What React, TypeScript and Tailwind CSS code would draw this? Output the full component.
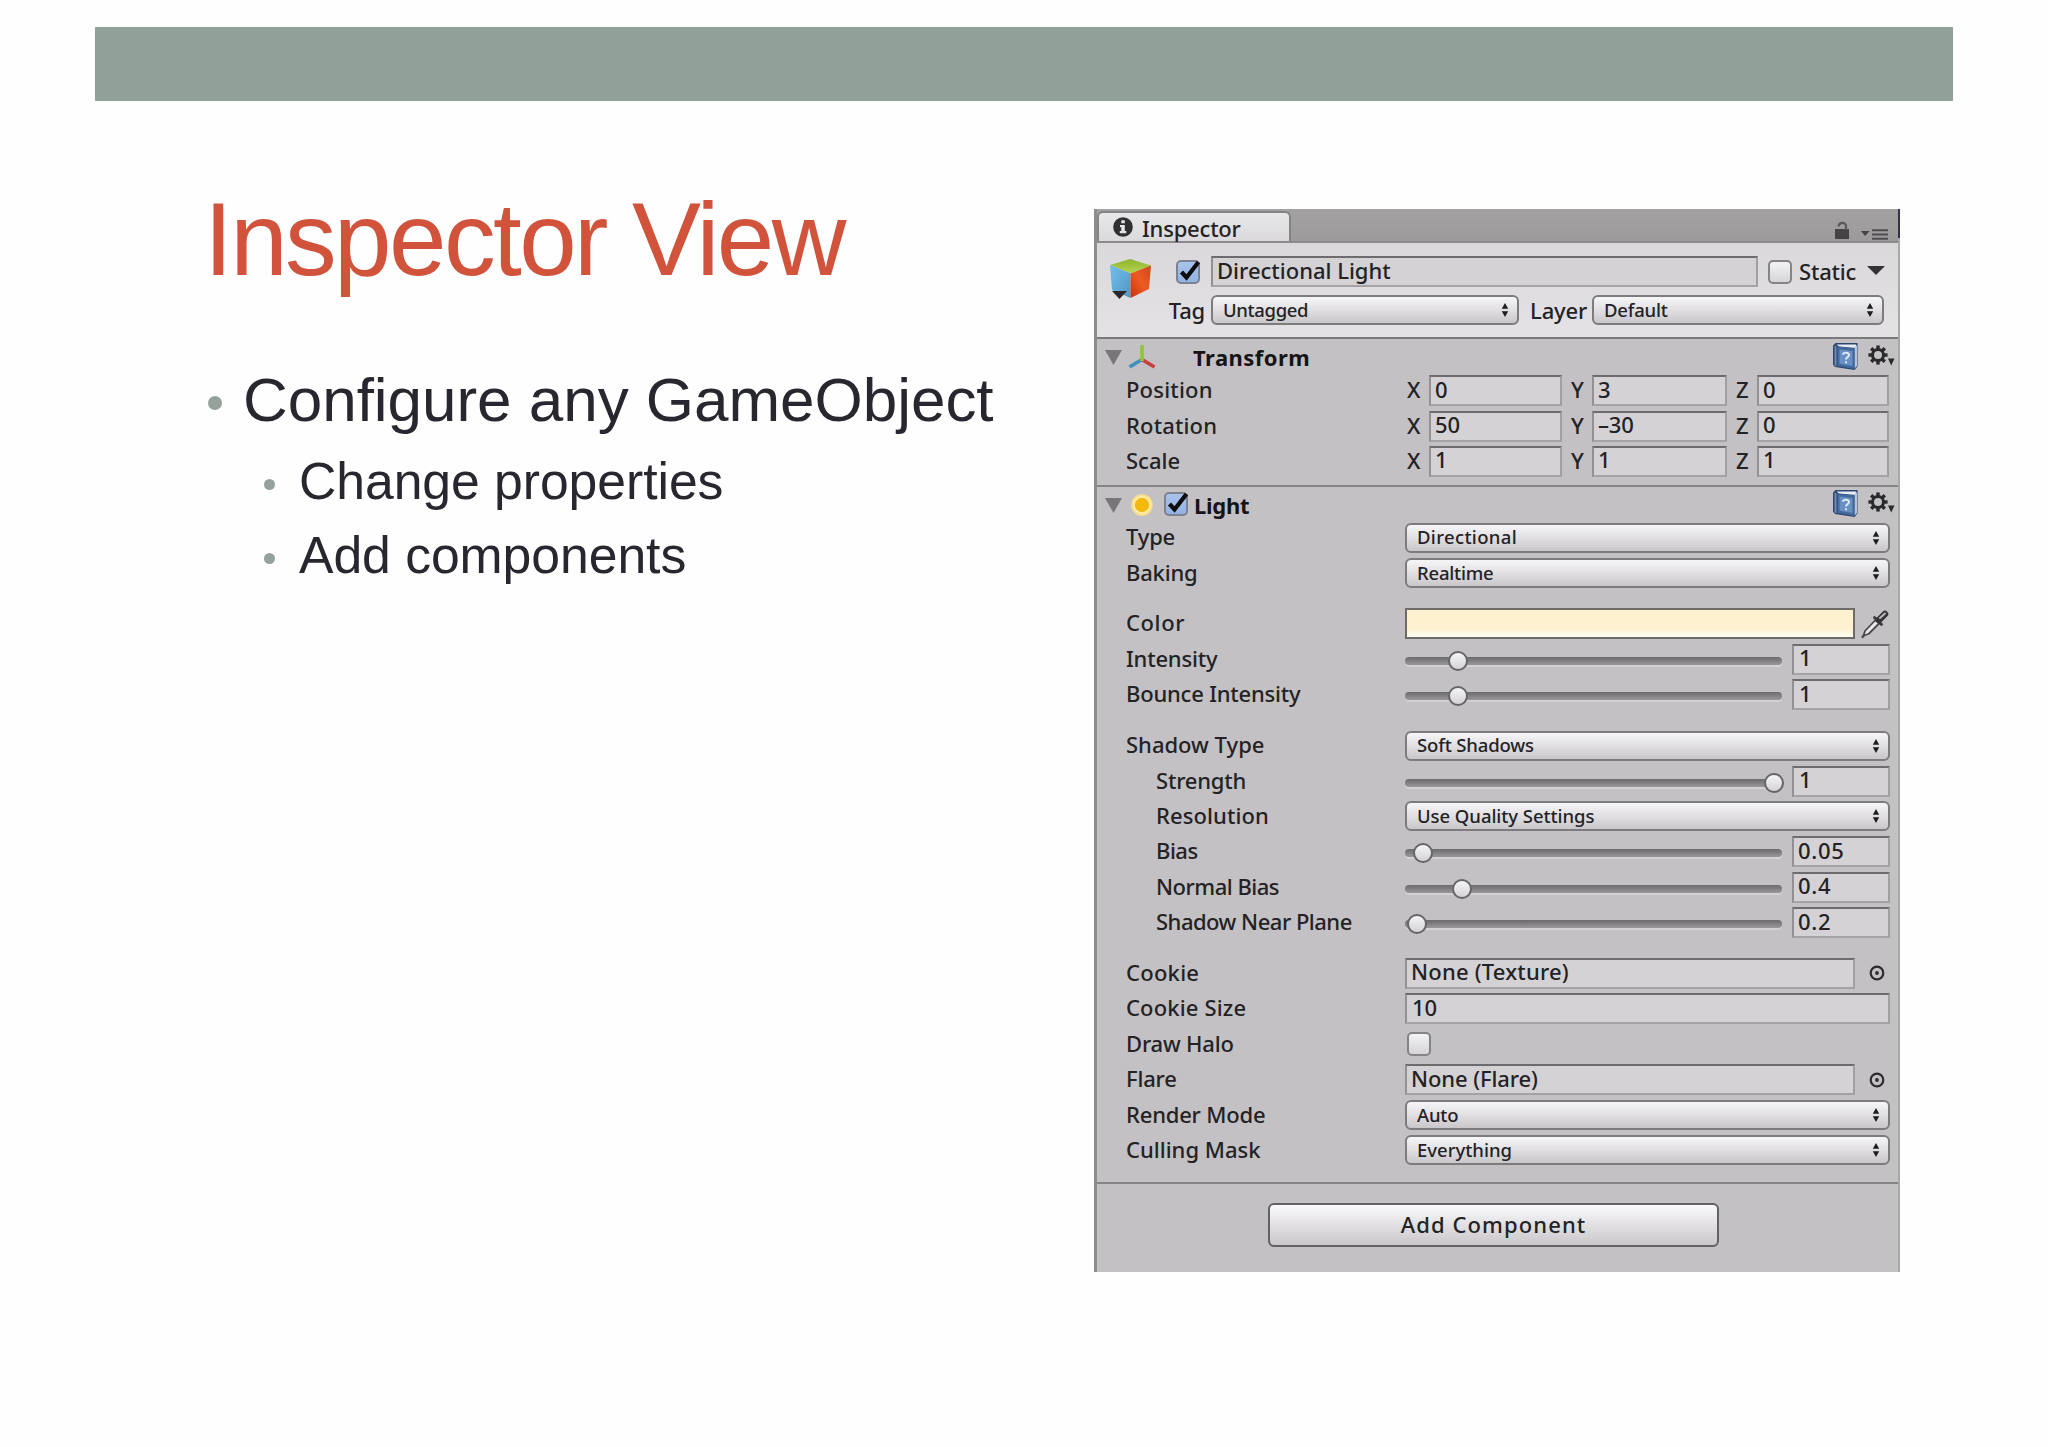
import React from 'react';
import clsx from 'clsx';

type Control =
  | { kind: 'dropdown'; value: string; track?: string }
  | { kind: 'slider'; value: string; pos: number }
  | { kind: 'object'; value: string; track?: string }
  | { kind: 'text'; value: string }
  | { kind: 'color' }
  | { kind: 'checkbox' };

interface Property {
  label: string;
  track?: string;
  indent?: boolean;
  control: Control;
}

const transformRows = [
  { label: 'Position', track: 'tracking-[0.2px]', values: ['0', '3', '0'] },
  { label: 'Rotation', track: 'tracking-[0.15px]', values: ['50', '–30', '0'] },
  { label: 'Scale', track: 'tracking-[0px]', values: ['1', '1', '1'] },
];

// Groups are separated by a small vertical gap
const lightGroups: Property[][] = [
  [
    { label: 'Type', control: { kind: 'dropdown', value: 'Directional', track: 'tracking-[0.35px]' } },
    { label: 'Baking', control: { kind: 'dropdown', value: 'Realtime' } },
  ],
  [
    { label: 'Color', track: 'tracking-[0.6px]', control: { kind: 'color' } },
    { label: 'Intensity', control: { kind: 'slider', value: '1', pos: 53 } },
    { label: 'Bounce Intensity', control: { kind: 'slider', value: '1', pos: 53 } },
  ],
  [
    { label: 'Shadow Type', track: 'tracking-[0px]', control: { kind: 'dropdown', value: 'Soft Shadows', track: 'tracking-[-0.15px]' } },
    { label: 'Strength', indent: true, control: { kind: 'slider', value: '1', pos: 369 } },
    { label: 'Resolution', track: 'tracking-[0.1px]', indent: true, control: { kind: 'dropdown', value: 'Use Quality Settings', track: 'tracking-[-0.05px]' } },
    { label: 'Bias', track: 'tracking-[-0.5px]', indent: true, control: { kind: 'slider', value: '0.05', pos: 18 } },
    { label: 'Normal Bias', track: 'tracking-[-0.5px]', indent: true, control: { kind: 'slider', value: '0.4', pos: 57 } },
    { label: 'Shadow Near Plane', track: 'tracking-[-0.5px]', indent: true, control: { kind: 'slider', value: '0.2', pos: 12 } },
  ],
  [
    { label: 'Cookie', track: 'tracking-[0.25px]', control: { kind: 'object', value: 'None (Texture)', track: 'tracking-[0.2px]' } },
    { label: 'Cookie Size', track: 'tracking-[0.15px]', control: { kind: 'text', value: '10' } },
    { label: 'Draw Halo', control: { kind: 'checkbox' } },
    { label: 'Flare', control: { kind: 'object', value: 'None (Flare)', track: 'tracking-[-0.1px]' } },
    { label: 'Render Mode', control: { kind: 'dropdown', value: 'Auto' } },
    { label: 'Culling Mask', track: 'tracking-[0px]', control: { kind: 'dropdown', value: 'Everything', track: 'tracking-[0px]' } },
  ],
];

function Dropdown({ value, className, track }: { value: string; className?: string; track?: string }) {
  return (
    <div
      className={clsx(
        'flex h-[30px] items-center justify-between rounded-[6px] border-2 border-[#7d7b7e] bg-linear-to-b from-[#f6f5f7] via-[#e1dfe2] to-[#c9c7ca] pr-[8px] pl-[10px]',
        className
      )}
    >
      <span className={clsx('-mt-px text-[18.5px] leading-[26px]', track)}>{value}</span>
      <svg width="8" height="14" viewBox="0 0 8 14" fill="#1d1c1f">
        <path d="M4 0 7.2 5.8H.8zM4 14 .8 8.2h6.4z" />
      </svg>
    </div>
  );
}

function Field({ value, className, track }: { value: string; className?: string; track?: string }) {
  return (
    <div
      className={clsx(
        'flex h-[31px] items-center border-2 border-t-[#6d6b6e] border-r-[#a19fa2] border-b-[#a5a3a6] border-l-[#929093] bg-[#d4d2d5] pl-1',
        className
      )}
    >
      <span className={clsx('-mt-[3px] leading-[27px]', track)}>{value}</span>
    </div>
  );
}

function Checkbox({ checked, className }: { checked?: boolean; className?: string }) {
  return (
    <span
      className={clsx(
        'relative block size-6 shrink-0 rounded-[5px] border-2',
        checked ? 'border-[#7c8292] bg-linear-to-b from-[#a9c3ea] to-[#93b3e2]' : 'border-[#858386] bg-linear-to-b from-[#f3f2f4] to-[#d6d4d7]',
        className
      )}
    >
      {checked && (
        <svg className="absolute -top-[2px] -left-[1px]" width="26" height="24" viewBox="0 0 26 24" fill="none" stroke="#0d0d10">
          <path d="M4.500 12 9.500 17.500 21.500 2" strokeWidth="4.200" />
        </svg>
      )}
    </span>
  );
}

function Slider({ value, pos }: { value: string; pos: number }) {
  return (
    <>
      <div className="relative mt-[3px] h-2 w-[377px] rounded-full bg-linear-to-b from-[#6c6a6d] to-[#9a989b] shadow-[0_2px_0_#d3d1d4]">
        <span
          className="absolute -top-[6px] size-5 -translate-x-1/2 rounded-full border-2 border-[#666467] bg-linear-to-b from-[#f5f4f6] to-[#d5d3d6]"
          style={{ left: pos }}
        />
      </div>
      <Field value={value} className="ml-[10px] w-[98px]" track={value.length > 1 ? 'tracking-[0.7px]' : 'ml-[1px]'} />
    </>
  );
}

function TargetIcon() {
  return (
    <svg className="ml-[14px]" width="16" height="16" viewBox="0 0 16 16">
      <circle cx="8" cy="8" r="6.300" fill="none" stroke="#2c2b2e" strokeWidth="2.200" />
      <circle cx="8" cy="8" r="1.900" fill="#2c2b2e" />
    </svg>
  );
}

function EyedropperIcon() {
  return (
    <svg className="ml-[5px]" width="29" height="30" viewBox="0 0 29 30">
      <path d="M3.500 26.500 5 22 15.500 11 19 14.500 8.500 25z" fill="#eceaed" stroke="#4a484b" strokeWidth="1.800" strokeLinejoin="round" />
      <path d="M14.500 8.500 21.500 15.500" stroke="#3a383b" strokeWidth="2.800" strokeLinecap="round" />
      <path d="M19 11 25 5" stroke="#353336" strokeWidth="6.500" strokeLinecap="round" />
      <path d="M20 9 25 4.500" stroke="#b9b7ba" strokeWidth="2" strokeLinecap="round" />
      <path d="M2.500 28 4 26.500" stroke="#4a484b" strokeWidth="2.400" strokeLinecap="round" />
    </svg>
  );
}

function BookIcon() {
  return (
    <svg width="27" height="29" viewBox="0 0 27 29">
      <path d="M1 3.500 3.500 1H25.500V24.500L22.500 28 3 25 1 22.500z" fill="#2d466f" />
      <path d="M4.500 2.500H24V6L7 4.500z" fill="#e6ecf5" />
      <path d="M22.500 5.500 25 3V24L22.500 26.500z" fill="#b7c5dc" />
      <path d="M5.500 4.500 22.500 6.500V27L5.500 24z" fill="#42689c" />
      <path d="M7.500 7.500 20.500 9V24L7.500 21.700z" fill="#6890c4" />
      <path d="M2.500 3.500V23L4.500 24.500V4.500z" fill="#6f8ab4" />
      <path d="M11 12.800C11 9.900 17 10.100 17 13 17 15.200 14 15 14 17.600M14 19.300V21.200" fill="none" stroke="#dfe9f6" strokeWidth="2" />
    </svg>
  );
}

const gearTeeth = [0, 45, 90, 135, 180, 225, 270, 315];

function GearIcon() {
  return (
    <svg width="28" height="24" viewBox="0 0 28 24">
      <circle cx="10" cy="10" r="5.500" fill="none" stroke="#2a292c" strokeWidth="3" />
      {gearTeeth.map((deg) => (
        <path key={deg} d="M8.300 .4H11.700V4H8.300z" fill="#2a292c" transform={`rotate(${deg} 10 10)`} />
      ))}
      <path d="M20 13.500H26.500L23.200 20.500z" fill="#2a292c" />
    </svg>
  );
}

function Foldout() {
  return (
    <svg className="mt-[3px]" width="17" height="15" viewBox="0 0 17 15">
      <path d="M0 0H17L8.500 15z" fill="#78767a" />
    </svg>
  );
}

function ComponentTools() {
  return (
    <div className="ml-auto flex items-center">
      <BookIcon />
      <div className="mt-[1px] ml-[9px]">
        <GearIcon />
      </div>
    </div>
  );
}

function renderControl(control: Control) {
  switch (control.kind) {
    case 'dropdown':
      return <Dropdown value={control.value} track={control.track} className="w-[485px]" />;
    case 'slider':
      return <Slider value={control.value} pos={control.pos} />;
    case 'object':
      return (
        <>
          <Field value={control.value} track={control.track} className="w-[450px]" />
          <TargetIcon />
        </>
      );
    case 'text':
      return <Field value={control.value} className="w-[485px]" track="ml-[1px]" />;
    case 'color':
      return (
        <>
          <div className="h-[31px] w-[450px] border-[2.500px] border-[#6f6b66] bg-linear-to-b from-[#fdf1d0] from-70% to-[#fffdf4]" />
          <EyedropperIcon />
        </>
      );
    case 'checkbox':
      return <Checkbox className="ml-[2px]" />;
  }
}

function ObjectHeader() {
  return (
    <div className="flex h-[96px] border-b-2 border-[#7b797c] bg-linear-to-b from-[#dad8db] to-[#e4e2e5] pt-[13px]">
      <div className="w-[70px] pt-[2px] pl-[12px]">
        <svg width="43" height="42" viewBox="0 0 43 42">
          <defs>
            <linearGradient id="cubeTop" x1="0" y1="0" x2="0" y2="1">
              <stop offset="0" stopColor="#8fb32c" />
              <stop offset="1" stopColor="#b4d552" />
            </linearGradient>
            <linearGradient id="cubeLeft" x1="0" y1="0" x2="1" y2="1">
              <stop offset="0" stopColor="#6fc0ea" />
              <stop offset="1" stopColor="#5596c6" />
            </linearGradient>
            <linearGradient id="cubeRight" x1="1" y1="0" x2="0" y2="1">
              <stop offset="0" stopColor="#c94a18" />
              <stop offset=".5" stopColor="#ee5a24" />
              <stop offset="1" stopColor="#c5340c" />
            </linearGradient>
          </defs>
          <path d="M1 7 21 1 42 7.500 21.500 15.500z" fill="url(#cubeTop)" />
          <path d="M1 7 21.500 15.500V40L3 32z" fill="url(#cubeLeft)" />
          <path d="M42 7.500 21.500 15.500V40L40 31z" fill="url(#cubeRight)" />
          <path d="M3 33H18L10.500 41z" fill="#2a282b" />
        </svg>
      </div>
      <div className="flex-1">
        <div className="flex h-[31px] items-center">
          <Checkbox checked className="ml-[9px]" />
          <Field value="Directional Light" className="ml-[11px] w-[547px]" track="tracking-[0px]" />
          <Checkbox className="ml-[10px]" />
          <span className="-mt-[2px] ml-[7px]">Static</span>
          <svg className="-mt-[2px] ml-[11px]" width="18" height="9" viewBox="0 0 18 9">
            <path d="M0 0H18L9 9z" fill="#343235" />
          </svg>
        </div>
        <div className="mt-2 flex h-[30px] items-center">
          <span className="w-[44px] pr-[6px] text-right">Tag</span>
          <Dropdown value="Untagged" className="w-[308px]" track="tracking-[-0.35px]" />
          <span className="w-[73px] pr-[5px] text-right">Layer</span>
          <Dropdown value="Default" className="w-[292px]" />
        </div>
      </div>
    </div>
  );
}

function Inspector() {
  return (
    <section className="h-[1063px] w-[806px] border-r-2 border-l-[3px] border-r-[#a9a7aa] border-l-[#8f8d90] bg-[#c4c1c4] font-['Noto_Sans',sans-serif] text-[22px] leading-none font-medium tracking-[-0.2px] text-[#232225]">
      {/* Tab strip */}
      <div className="relative flex h-[34px] border-b-2 border-[#8c8a8d] bg-linear-to-b from-[#a3a1a2] to-[#9c9a9b] pt-[2px]">
        <div className="flex h-[30px] w-[194px] items-center rounded-t-[6px] border-2 border-b-0 border-[#868487] bg-linear-to-b from-[#e8e7e9] to-[#dbd9dc] pl-[14px]">
          <svg width="20" height="20" viewBox="0 0 20 20">
            <circle cx="10" cy="10" r="9.800" fill="#302f32" />
            <path d="M8.300 3.300H11.800V6.200H8.300zM7 8H11.800V14H13.300V16.200H6.800V14H8.300V10.200H7z" fill="#e6e5e7" />
          </svg>
          <span className="mt-[1px] ml-[9px]">Inspector</span>
        </div>
        <svg className="mt-[10px] ml-auto" width="16" height="18" viewBox="0 0 16 18">
          <path d="M1 8H15V18H1z" fill="#454346" />
          <path d="M4.500 5.500C5 .8 12 .8 12 5V9" fill="none" stroke="#5b595c" strokeWidth="2.200" />
        </svg>
        <svg className="mt-[18px] mr-[10px] ml-[11px]" width="27" height="11" viewBox="0 0 27 11">
          <path d="M0 2H8.500L4.200 7z" fill="#454346" />
          <path d="M11 1.200H27M11 5.500H27M11 9.800H27" stroke="#4f4d50" strokeWidth="2" />
        </svg>
        <span className="absolute top-0 -right-[2px] h-[29px] w-[2px] bg-[#35334a]" />
      </div>

      <ObjectHeader />

      {/* Transform */}
      <div className="h-[148px] border-b-2 border-[#868487]">
        <div className="flex h-[34px] items-center pr-[2px] pl-[8px]">
          <Foldout />
          <svg className="mt-[2px] ml-[6px]" width="28" height="24" viewBox="0 0 28 24" fill="none" strokeWidth="3.600">
            <path d="M14 14.500 1.500 22" stroke="#3f8fc0" />
            <path d="M14 14.500 26.500 22" stroke="#c8403c" />
            <path d="M14 16V0" stroke="#8fc63c" />
          </svg>
          <span className="mt-[2px] ml-[37px] font-bold tracking-[0.450px] text-[#151417]">Transform</span>
          <ComponentTools />
        </div>
        {transformRows.map((row) => (
          <div key={row.label} className="flex h-[35.400px] items-center pl-[29px]">
            <span className={clsx('-mt-[3px] w-[281px]', row.track)}>{row.label}</span>
            <span className="-mt-[3px] w-[22px]">X</span>
            <Field value={row.values[0]} className="w-[133px]" />
            <span className="-mt-[3px] w-[30px] pl-[9px]">Y</span>
            <Field value={row.values[1]} className="w-[135px]" />
            <span className="-mt-[3px] w-[30px] pl-[9px]">Z</span>
            <Field value={row.values[2]} className="w-[132px]" />
          </div>
        ))}
      </div>

      {/* Light */}
      <div className="h-[697px] border-b-2 border-[#868487]">
        <div className="flex h-[33px] items-center pr-[2px] pl-[8px]">
          <Foldout />
          <svg className="mt-[2px] ml-[9px]" width="22" height="22" viewBox="0 0 22 22">
            <circle cx="11" cy="11" r="10.800" fill="#fbe08a" />
            <circle cx="11" cy="11" r="8.800" fill="#fdeeb0" />
            <circle cx="11" cy="11" r="7.200" fill="#f3b90c" />
          </svg>
          <Checkbox checked className="ml-[11px]" />
          <span className="mt-[2px] ml-[6px] font-bold tracking-[-0.300px] text-[#151417]">Light</span>
          <ComponentTools />
        </div>
        <div className="flex flex-col gap-[15.500px]">
          {lightGroups.map((group, i) => (
            <div key={i}>
              {group.map((prop) => (
                <div key={prop.label} className="flex h-[35.400px] items-center">
                  <span className={clsx('-mt-[3px] w-[308px] shrink-0', prop.indent ? 'pl-[59px]' : 'pl-[29px]', prop.track)}>{prop.label}</span>
                  {renderControl(prop.control)}
                </div>
              ))}
            </div>
          ))}
        </div>
      </div>

      <button className="mt-[19px] ml-[171px] block h-[44px] w-[451px] rounded-[6px] border-2 border-[#636164] bg-linear-to-b from-[#fbfafc] via-[#e2e0e3] to-[#cac8cb] pb-[3px] tracking-[1.100px]">
        Add Component
      </button>
    </section>
  );
}

export default function App() {
  return (
    <div className="h-[1447px] w-[2048px] overflow-hidden bg-[#fefefe] pt-[27px] font-['Liberation_Sans',sans-serif] text-[#28262e]">
      <div className="mx-[95px] h-[74px] bg-[#91a199]" />
      <div className="flex justify-between pr-[148px] pl-[207px]">
        <div className="pt-[78px]">
          <h1 className="-ml-[3px] text-[103.400px] leading-[120px] tracking-[-2.600px] text-[#d2533c]">Inspector View</h1>
          <ul className="mt-[64px]">
            <li className="flex h-[74px] items-center text-[62px] leading-[74px]">
              <span className="mt-[6px] ml-[1px] size-[14px] rounded-full bg-[#95a29b]" />
              <span className="ml-[21px] tracking-[-0.03px]">Configure any GameObject</span>
            </li>
            <li className="mt-[13px] flex h-[62px] items-center text-[51.700px] leading-[62px]">
              <span className="mt-[6px] ml-[57px] size-[11px] rounded-full bg-[#95a29b]" />
              <span className="ml-[24px] tracking-[-0.050px]">Change properties</span>
            </li>
            <li className="mt-[12px] flex h-[62px] items-center text-[51.700px] leading-[62px]">
              <span className="mt-[6px] ml-[57px] size-[11px] rounded-full bg-[#95a29b]" />
              <span className="ml-[24px] tracking-[-0.050px]">Add components</span>
            </li>
          </ul>
        </div>
        <div className="pt-[108px]">
          <Inspector />
        </div>
      </div>
    </div>
  );
}
